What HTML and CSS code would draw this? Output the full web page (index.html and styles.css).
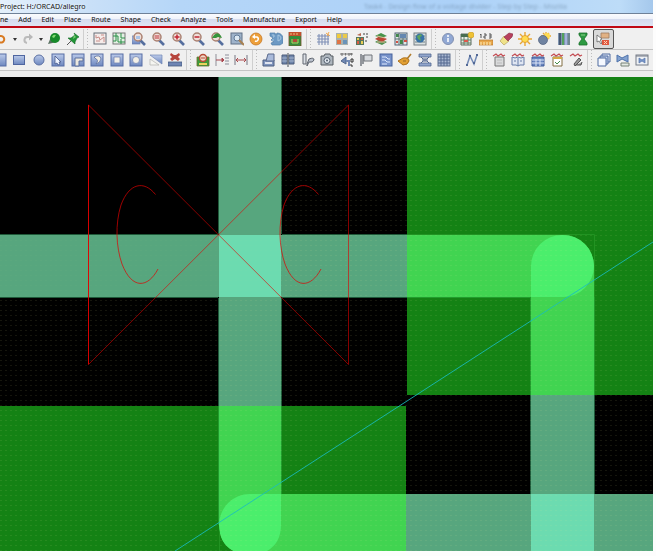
FILE: index.html
```html
<!DOCTYPE html>
<html lang="en">
<head>
<meta charset="utf-8">
<title>Project: H:/ORCAD/allegro</title>
<link rel="stylesheet" href="styles.css">
</head>
<body>
<svg class="sprite" aria-hidden="true">
  <defs>
    <linearGradient id="steel" x1="0" y1="0" x2="0" y2="1"><stop offset="0" stop-color="#bccbea"/><stop offset="1" stop-color="#6d87bf"/></linearGradient>
    <symbol id="i-undo" viewBox="0 0 14 14"><path d="M3 4h4a3.300 3.300 0 1 1-2 6" fill="none" stroke="#d87a22" stroke-width="2"/><path d="M5 1v6L1 4z" fill="#d87a22"/></symbol>
    <symbol id="i-redo" viewBox="0 0 14 14"><path d="M10 5H7a3 3 0 0 0-1 6" fill="none" stroke="#bbb" stroke-width="2"/><path d="M8 1.500v7L12 5z" fill="#b8b8b8"/></symbol>
    <symbol id="i-caret" viewBox="0 0 6 14"><path d="M1 6h4L3 9z" fill="#333"/></symbol>
    <symbol id="i-world" viewBox="0 0 14 14"><path d="M1 12l3-7 6 5z" fill="#587060"/><circle cx="8" cy="6" r="5" fill="#188a2b"/><path d="M5 5q1-3 4-2l-2 3z" fill="#80dc70"/></symbol>
    <symbol id="i-pin" viewBox="0 0 14 14"><path d="M1 13l5-5" stroke="#555" stroke-width="1"/><path d="M8 1l5 4-2 1-2 4 0 2-7-6 3 0 4-3z" fill="#209536" stroke="#116824" stroke-width=".6"/><path d="M8 3l2 2-3 2z" fill="#76cc70"/></symbol>
    <symbol id="i-ratsoff" viewBox="0 0 14 14"><rect x="1" y="1" width="12" height="11" fill="#f5ecea" stroke="#666e78"/><path d="M3 3v3l3-1 1 3 4-3v5M3 9h4M8 3h3" fill="none" stroke="#c98e8a"/></symbol>
    <symbol id="i-ratson" viewBox="0 0 14 14"><rect x="1" y="1" width="12" height="11" fill="#e4f0e4" stroke="#777"/><path d="M1 4h5v6h7M1 9h3V1M9 1v5h4M9 7v5" fill="none" stroke="#2b9046"/></symbol>
    <symbol id="i-mag" viewBox="0 0 14 14"><path d="M8 8l5 5" stroke="#566f9e" stroke-width="2.600"/><circle cx="6" cy="5" r="4" fill="#f0dfd9" stroke="#aa8171" stroke-width="1.500"/></symbol>
    <symbol id="i-zoomwin" viewBox="0 0 14 14"><rect x="0" y="4" width="8" height="8" fill="url(#steel)" stroke="#6a7fae" stroke-width=".7"/><use href="#i-mag" width="14" height="14"/><path d="M4 4h4v3H4z" fill="#a9c3e7"/></symbol>
    <symbol id="i-zoomfit" viewBox="0 0 14 14"><use href="#i-mag" width="14" height="14"/><path d="M3.500 4h5M3.500 6h5" stroke="#c03239" stroke-width="1.200"/></symbol>
    <symbol id="i-zoomin" viewBox="0 0 14 14"><use href="#i-mag" width="14" height="14"/><path d="M3.500 5h5M6 2.500v5" stroke="#c32632" stroke-width="1.500"/></symbol>
    <symbol id="i-zoomout" viewBox="0 0 14 14"><use href="#i-mag" width="14" height="14"/><path d="M3.500 5h5" stroke="#c32632" stroke-width="1.500"/></symbol>
    <symbol id="i-zoomprev" viewBox="0 0 14 14"><use href="#i-mag" width="14" height="14"/><path d="M2 6l2-3q4-4 7 1l1 2-4-1-2 1z" fill="#36953a"/></symbol>
    <symbol id="i-zoomsel" viewBox="0 0 14 14"><rect x="1" y="1" width="11" height="11" fill="#9fb3ca" stroke="#617086"/><circle cx="7" cy="6" r="3" fill="#dce8f2" stroke="#617a98"/><path d="M9 8l5 5" stroke="#a88152" stroke-width="2"/></symbol>
    <symbol id="i-refresh" viewBox="0 0 14 14"><circle cx="7" cy="7" r="6" fill="#ed9f3a" stroke="#c77926" stroke-width=".8"/><path d="M5 5h3a2 2 0 1 1-2 4" fill="none" stroke="#fff" stroke-width="1.500"/><path d="M6 2v5L3 5z" fill="#fff"/></symbol>
    <symbol id="i-3d" viewBox="0 0 14 14"><path d="M1 1h5l1 2 1-2q5 0 6 5v5l-3 2H3l-1-2 3-1-3-2 2-2-3-2z" fill="#6c99c4" stroke="#527fa9" stroke-width=".7"/><path d="M3 3h2v2H4M3 8h2M9 3v6q3-1 3-3T9 3" fill="none" stroke="#a7c7e0"/></symbol>
    <symbol id="i-board" viewBox="0 0 14 14"><rect x="1" y="0" width="12" height="14" fill="#348d3b" stroke="#75502b" stroke-width=".8"/><path d="M1 0h12v4H1z" fill="#c44f2d"/><path d="M3 1v2M6 1v2M9 1v2" stroke="#eac27e"/><path d="M4 7v4h6V7" fill="none" stroke="#b6cd64"/><path d="M5 7h4v3H5z" fill="#b34b37"/></symbol>
    <symbol id="i-grid" viewBox="0 0 14 14"><path d="M3 2v11M6 2v11M9 2v11M12 2v11M1 4h12M1 7h12M1 10h12" stroke="#7f90b6" stroke-width="1.100"/><path d="M10 1l4 3M13 0l-2 4" stroke="#f4a94c"/></symbol>
    <symbol id="i-colors" viewBox="0 0 14 14"><path d="M1 1h12v12H1z" fill="#a9b1ad"/><path d="M2 2h4v4H2z" fill="#f0ca3b"/><path d="M8 2h4v4H8z" fill="#e9c94a"/><path d="M2 8h4v4H2z" fill="#df7445"/><path d="M8 8h4v4H8z" fill="#6a93b9"/></symbol>
    <symbol id="i-shadow" viewBox="0 0 14 14"><path d="M1 5h8v8H1z" fill="#56765c"/><path d="M2 6h2v2H2zM6 9h2v3H6z" fill="#ebcd55"/><path d="M2 9h2v3H2zM6 6h2v2H6z" fill="#d85b44"/><path d="M8 1h2v2H8zM11 1h2v2h-2zM11 4h2v2h-2zM10 8h2v2h-2z" fill="#999"/><path d="M2 3l4-2v3z" fill="#b96a50"/></symbol>
    <symbol id="i-layers" viewBox="0 0 14 14"><path d="M1 10l5-3 7 3-5 3z" fill="#4e9052"/><path d="M1 7l5-3 7 3-5 3z" fill="#ba4635"/><path d="M1 4l6-3 6 3-6 2z" fill="#47934a"/><path d="M3 4l8 2M3 10l8 0" stroke="#e7b795"/></symbol>
    <symbol id="i-table" viewBox="0 0 14 14"><rect x="1" y="1" width="12" height="12" fill="#e2e8e6" stroke="#536577"/><path d="M2 2h3v3H2zM6 8h3v4H6z" fill="#418b4a"/><path d="M6 2h6v4H6z" fill="#6487b0"/><path d="M1 7h12M5 1v12M9 6v7" stroke="#5f7277"/><path d="M10 8h3v2h-3zM2 9h2v2H2z" fill="#d45043"/></symbol>
    <symbol id="i-globe" viewBox="0 0 14 14"><rect x="1" y="1" width="12" height="12" fill="#dbe1e1" stroke="#777f83"/><path d="M2 4h10M2 7h10M2 10h10" stroke="#6f8087"/><circle cx="7" cy="6" r="4.500" fill="#3872a5"/><path d="M4 4l4-2 1 2-2 1 1 4-3-2z" fill="#5ca55d"/></symbol>
    <symbol id="i-info" viewBox="0 0 14 14"><circle cx="7" cy="7" r="5.500" fill="#91a8d4" stroke="#8290b0"/><path d="M7 6v4M7 3v2" stroke="#fff" stroke-width="1.500"/></symbol>
    <symbol id="i-sheet" viewBox="0 0 14 14"><path d="M1 2h10v11H1z" fill="#e8ede5" stroke="#5e6d61"/><path d="M1 2h9v3H1z" fill="#486d50"/><path d="M4 5v8M8 5v8M1 8h10M1 11h10" stroke="#607e66"/><path d="M4 8h4v2H4z" fill="#dc594d"/><circle cx="11" cy="3" r="3" fill="#efc235" stroke="#c89a24" stroke-width=".6"/></symbol>
    <symbol id="i-ruler" viewBox="0 0 14 14"><path d="M2 2v4M1 3l1-1M5 2h2v2H5v2h2M10 2h2v4h-2M10 4h2" fill="none" stroke="#555"/><path d="M0 8h14v5H0z" fill="#e9a84c" stroke="#b8752c" stroke-width=".7"/><path d="M2 10v3M5 10v3M8 10v3M11 10v3" stroke="#fff0bd"/></symbol>
    <symbol id="i-brush" viewBox="0 0 14 14"><path d="M5 4l5 5-5 4-4-4z" fill="#efe28a" stroke="#b4a35d" stroke-width=".7"/><path d="M10 1l4 1-1 3-4 4-4-4z" fill="#b8405d" stroke="#812c44" stroke-width=".6"/></symbol>
    <symbol id="i-sun" viewBox="0 0 14 14"><path d="M7 0v14M0 7h14M2 2l10 10M12 2L2 12" stroke="#e7a634" stroke-width="1.400"/><circle cx="7" cy="7" r="3.500" fill="#ffdb50" stroke="#df9723" stroke-width=".8"/></symbol>
    <symbol id="i-suncloud" viewBox="0 0 14 14"><path d="M9 0v8M4 4h10M6 1l6 6M12 1L7 6" stroke="#e7a634" stroke-width="1.300"/><circle cx="10" cy="4" r="3" fill="#ffdb50"/><circle cx="6" cy="8" r="4.500" fill="#7083a1" stroke="#4e5f7c" stroke-width=".7"/></symbol>
    <symbol id="i-bars" viewBox="0 0 14 14"><path d="M1 1h12v12H1z" fill="#7f93ae"/><path d="M3 1v12" stroke="#455773" stroke-width="2"/><path d="M6 1v12" stroke="#52a15b" stroke-width="2"/><path d="M9 1v12" stroke="#a3b2dc" stroke-width="2"/><path d="M12 1v12" stroke="#607a72" stroke-width="1"/></symbol>
    <symbol id="i-glass" viewBox="0 0 14 14"><path d="M3 1h8v2L8 7l3 4v2H3v-2l3-4-3-4z" fill="#2d9a42" stroke="#19702b" stroke-width=".8"/><path d="M5 3h4" stroke="#8ad087"/></symbol>
    <symbol id="i-place" viewBox="0 0 14 14"><path d="M5 1h8v5H5z" fill="#e1b184" stroke="#a07b60" stroke-width=".8"/><path d="M6 8h7v5H6z" fill="#e05840"/><path d="M8 9l3 3M11 9l-3 3" stroke="#ffd3b9"/><path d="M1 3v7l2-1 2 3 1-1-2-3 2-1z" fill="#fff" stroke="#555" stroke-width=".7"/></symbol>
    <symbol id="i-rect" viewBox="0 0 14 14"><rect x="1.500" y="2.500" width="11" height="9" fill="url(#steel)" stroke="#4f66a0"/></symbol>
    <symbol id="i-circle" viewBox="0 0 14 14"><circle cx="7" cy="7" r="5" fill="url(#steel)" stroke="#5c70a3"/></symbol>
    <symbol id="i-square" viewBox="0 0 14 14"><rect x="1" y="1" width="12" height="12" fill="url(#steel)" stroke="#566ca4"/></symbol>
    <symbol id="i-select" viewBox="0 0 14 14"><use href="#i-square" width="14" height="14"/><path d="M4 3v8l2-1 1 2 2-1-1-2h2z" fill="#eef4ff" stroke="#445689" stroke-width=".8"/></symbol>
    <symbol id="i-void" viewBox="0 0 14 14"><use href="#i-square" width="14" height="14"/><path d="M4 13V5h8v3H8v5z" fill="#ece8df" stroke="#5d709e"/></symbol>
    <symbol id="i-pie" viewBox="0 0 14 14"><use href="#i-square" width="14" height="14"/><path d="M4 4q6-3 7 2-1 4-5 5 3-4 0-5z" fill="#f1eee5" stroke="#5d709e" stroke-width=".8"/></symbol>
    <symbol id="i-frame" viewBox="0 0 14 14"><use href="#i-square" width="14" height="14"/><path d="M4 4h6v6H4z" fill="#f3f0e9" stroke="#7487b4" stroke-width=".8"/></symbol>
    <symbol id="i-hole" viewBox="0 0 14 14"><use href="#i-square" width="14" height="14"/><circle cx="7" cy="7" r="3.500" fill="#f4f0e7" stroke="#7487b4" stroke-width=".8"/></symbol>
    <symbol id="i-cut" viewBox="0 0 14 14"><path d="M1 2h12v9z" fill="url(#steel)" stroke="#7187b5" stroke-width=".7"/><path d="M1 6l9 6H1z" fill="#f5f5f1" stroke="#b3b3af" stroke-width=".7"/></symbol>
    <symbol id="i-delete" viewBox="0 0 14 14"><path d="M3 0l3 2h2l3-2 1 2-2 2 2 2-2 2-3-2-3 2-2-2 2-2-2-2z" fill="#b6453d"/><path d="M0 9h14v4H0z" fill="#6e85b4" stroke="#475a80" stroke-width=".8"/></symbol>
    <symbol id="i-chip" viewBox="0 0 14 14"><path d="M1 4h12v9H1z" fill="#3c9b3b" stroke="#6f6f31" stroke-width=".8"/><circle cx="7" cy="5" r="3.500" fill="#f0d9c8" stroke="#b74b36" stroke-width="1.500"/><path d="M5 5h4" stroke="#b74b36"/><path d="M3 11h8" stroke="#e9d35d" stroke-width="2"/></symbol>
    <symbol id="i-dimedge" viewBox="0 0 14 14"><path d="M1 1v12" stroke="#8f8f98"/><path d="M11 1v12M13 1v12" stroke="#8d8d99" stroke-dasharray="2 1"/><path d="M1 7h7M7 5l2 2-2 2z" fill="#aa4851" stroke="#aa4851"/></symbol>
    <symbol id="i-dim" viewBox="0 0 14 14"><path d="M1 2v10M13 2v10" stroke="#777782"/><path d="M2 7h10M4 5L2 7l2 2M10 5l2 2-2 2" fill="none" stroke="#ab4a4e"/></symbol>
    <symbol id="i-print" viewBox="0 0 14 14"><path d="M1 7h11v6H1z" fill="#8095be" stroke="#4d5e81"/><path d="M6 1h6v7H4z" fill="#a9bada" stroke="#5b6b8d"/><path d="M3 10h7" stroke="#fff" stroke-width="1.500"/></symbol>
    <symbol id="i-mirror" viewBox="0 0 14 14"><path d="M1 2h5v9H1zM8 2h5v9H8z" fill="#6f85ab" stroke="#4d5d7b"/><path d="M7 0v14" stroke="#464c55"/><path d="M1 5h5M8 5h5M1 8h5M8 8h5" stroke="#b4c1d7" stroke-width=".8"/></symbol>
    <symbol id="i-clip" viewBox="0 0 14 14"><path d="M2 1h3v10H2z" fill="#dce0e6" stroke="#626872"/><path d="M6 11l2-5q5-2 5 1-1 3-5 2l-2 4z" fill="#b9c0cc" stroke="#5c626c"/></symbol>
    <symbol id="i-camera" viewBox="0 0 14 14"><path d="M1 3h3l1-2h5l1 2h2v9H1z" fill="#aeb6be" stroke="#575d63"/><circle cx="7" cy="7.500" r="3" fill="#e1e7ef" stroke="#54606e"/><circle cx="7" cy="7.500" r="1" fill="#54606e"/></symbol>
    <symbol id="i-rename" viewBox="0 0 14 14"><path d="M1 0h2v2H1zM5 0h1v2H5zM8 0h2v2H8zM11 0h1v2h-1z" fill="none" stroke="#555" stroke-width=".8"/><path d="M6 4v7L1 8z" fill="#7189b4" stroke="#53688d"/><path d="M6 8h3v5" fill="none" stroke="#7189b4" stroke-width="2"/><path d="M11 6v3h2V6zM11 11v2h2" fill="none" stroke="#333"/></symbol>
    <symbol id="i-flag" viewBox="0 0 14 14"><path d="M2 1v12M4 2v9" stroke="#747980" stroke-width="1.500"/><path d="M5 2h8v6H5z" fill="#d8dbdf" stroke="#70757b"/></symbol>
    <symbol id="i-script" viewBox="0 0 14 14"><rect x="1" y="1" width="12" height="12" fill="#7792ca" stroke="#47629c"/><path d="M3 4h4l2 2h2M3 7h3l2 2h3M3 11h5" fill="none" stroke="#dce7fc"/></symbol>
    <symbol id="i-teardrop" viewBox="0 0 14 14"><path d="M0 8l5-3q6-1 6 3-1 4-6 4z" fill="#e2a034" stroke="#ac711d"/><path d="M9 6l4-5M5 8h3" stroke="#b07c2c" stroke-width="1.600"/></symbol>
    <symbol id="i-spread" viewBox="0 0 14 14"><path d="M1 1h12v3H1zM1 10h12v3H1z" fill="#91a5cc" stroke="#52678f" stroke-width=".8"/><path d="M3 4l2 2h4l2-2M3 10l2-2h4l2 2M4 7h6" fill="none" stroke="#52678f"/></symbol>
    <symbol id="i-mesh" viewBox="0 0 14 14"><rect x="1" y="1" width="12" height="12" fill="#a9b8d2" stroke="#61718d"/><path d="M1 4h12M1 7h12M1 10h12M4 1v12M7 1v12M10 1v12" fill="none" stroke="#54698f"/></symbol>
    <symbol id="i-route" viewBox="0 0 14 14"><path d="M2 12l3-9 4 8 3-9" fill="none" stroke="#7189b5" stroke-width="1.500"/><path d="M1 11h2v2H1zM4 2h2v2H4zM8 9h2v2H8zM11 1h2v2h-2z" fill="#526895"/></symbol>
    <symbol id="i-net" viewBox="0 0 14 14"><path d="M1 3l3-2 2 2 3-2 2 2 2-1" fill="none" stroke="#c44c53" stroke-width="1.200"/></symbol>
    <symbol id="i-net1" viewBox="0 0 14 14"><path d="M3 4h9v9H3z" fill="#d9dadb" stroke="#777"/><path d="M5 7h5M5 10h5" stroke="#bbb"/><use href="#i-net" width="14" height="14"/></symbol>
    <symbol id="i-net2" viewBox="0 0 14 14"><path d="M1 4l3 1 3-1 3 1 3-1v8H9l-2 1-2-1H1z" fill="#e0e6f2" stroke="#667da6"/><path d="M7 5v8M3 8h2M9 8h2" stroke="#667da6"/><use href="#i-net" width="14" height="14"/></symbol>
    <symbol id="i-net3" viewBox="0 0 14 14"><path d="M1 4h12v9H1z" fill="#6985bf" stroke="#435f9a"/><path d="M1 7h12M1 10h12M5 6v7M9 6v7" stroke="#dbe3f5"/><use href="#i-net" width="14" height="14"/></symbol>
    <symbol id="i-net4" viewBox="0 0 14 14"><path d="M3 4h9v9H3z" fill="#fff" stroke="#826e42"/><path d="M3 4h9v2H3z" fill="#d5a944"/><path d="M5 9l2 2 3-3" fill="none" stroke="#448b45"/><use href="#i-net" width="14" height="14"/></symbol>
    <symbol id="i-net5" viewBox="0 0 14 14"><path d="M5 11l5-6 2 2-6 6zM7 12h5l1-3" fill="#999" stroke="#555"/><use href="#i-net" width="14" height="14"/></symbol>
    <symbol id="i-cascade" viewBox="0 0 14 14"><path d="M5 1h8v8H5z" fill="#e2e9f8" stroke="#4f6b9f"/><path d="M3 3h8v8H3z" fill="#bdcce9" stroke="#4f6b9f"/><path d="M1 5h8v8H1z" fill="#f5f8ff" stroke="#4f6b9f"/></symbol>
    <symbol id="i-bow" viewBox="0 0 14 14"><path d="M1 2l5 3 6-3v7L6 6 1 9z" fill="#83a2d0" stroke="#4e72ab"/><path d="M5 10h8v3H5z" fill="#e3e9e3" stroke="#778276"/></symbol>
    <symbol id="i-bowbox" viewBox="0 0 14 14"><rect x="1" y="2" width="12" height="10" fill="#eef1f5" stroke="#747b86"/><path d="M1 3h12" stroke="#747b86"/><path d="M4 5l3 2 3-2v5L7 8l-3 2z" fill="#7896ca" stroke="#5474ab" stroke-width=".7"/></symbol>
  </defs>
</svg>
<div class="window">
  <header class="titlebar">
    <h1 class="title">Project: H:/ORCAD/allegro</h1>
    <span class="ghost" aria-hidden="true">Task4 - Design flow of a voltage divider - Step by Step - Mozilla</span>
  </header>
  <nav class="menubar" aria-label="Main menu">
    <button>ne</button><button>Add</button><button>Edit</button><button>Place</button><button>Route</button><button>Shape</button><button>Check</button><button>Analyze</button><button>Tools</button><button>Manufacture</button><button>Export</button><button>Help</button>
  </nav>
  <div class="toolbar" role="toolbar" aria-label="View tools">
    <div class="group history">
      <button aria-label="Undo"><svg><use href="#i-undo"/></svg></button>
      <button class="drop" aria-label="Undo list"><svg><use href="#i-caret"/></svg></button>
      <button aria-label="Redo"><svg><use href="#i-redo"/></svg></button>
      <button class="drop" aria-label="Redo list"><svg><use href="#i-caret"/></svg></button>
      <button aria-label="World"><svg><use href="#i-world"/></svg></button>
      <button aria-label="Pin"><svg><use href="#i-pin"/></svg></button>
    </div>
    <div class="group eleven">
      <button aria-label="Unrats"><svg><use href="#i-ratsoff"/></svg></button>
      <button aria-label="Rats"><svg><use href="#i-ratson"/></svg></button>
      <button aria-label="Zoom window"><svg><use href="#i-zoomwin"/></svg></button>
      <button aria-label="Zoom fit"><svg><use href="#i-zoomfit"/></svg></button>
      <button aria-label="Zoom in"><svg><use href="#i-zoomin"/></svg></button>
      <button aria-label="Zoom out"><svg><use href="#i-zoomout"/></svg></button>
      <button aria-label="Zoom previous"><svg><use href="#i-zoomprev"/></svg></button>
      <button aria-label="Zoom selection"><svg><use href="#i-zoomsel"/></svg></button>
      <button aria-label="Refresh"><svg><use href="#i-refresh"/></svg></button>
      <button aria-label="3D view"><svg><use href="#i-3d"/></svg></button>
      <button aria-label="Board"><svg><use href="#i-board"/></svg></button>
    </div>
    <div class="group six">
      <button aria-label="Grid"><svg><use href="#i-grid"/></svg></button>
      <button aria-label="Colors"><svg><use href="#i-colors"/></svg></button>
      <button aria-label="Shadow"><svg><use href="#i-shadow"/></svg></button>
      <button aria-label="Layers"><svg><use href="#i-layers"/></svg></button>
      <button aria-label="Constraints"><svg><use href="#i-table"/></svg></button>
      <button aria-label="Globe"><svg><use href="#i-globe"/></svg></button>
    </div>
    <div class="group nine">
      <button aria-label="Information"><svg><use href="#i-info"/></svg></button>
      <button aria-label="Properties"><svg><use href="#i-sheet"/></svg></button>
      <button aria-label="Measure"><svg><use href="#i-ruler"/></svg></button>
      <button aria-label="Highlight"><svg><use href="#i-brush"/></svg></button>
      <button aria-label="Brighten"><svg><use href="#i-sun"/></svg></button>
      <button aria-label="Dim"><svg><use href="#i-suncloud"/></svg></button>
      <button aria-label="Layer bars"><svg><use href="#i-bars"/></svg></button>
      <button aria-label="Status"><svg><use href="#i-glass"/></svg></button>
      <button class="active" aria-pressed="true" aria-label="Place mode"><svg><use href="#i-place"/></svg></button>
    </div>
  </div>
  <div class="toolbar second" role="toolbar" aria-label="Edit tools">
    <div class="group ten lead">
      <button aria-label="Shape"><svg><use href="#i-square"/></svg></button>
      <button aria-label="Rectangle"><svg><use href="#i-rect"/></svg></button>
      <button aria-label="Circle"><svg><use href="#i-circle"/></svg></button>
      <button aria-label="Select shape"><svg><use href="#i-select"/></svg></button>
      <button aria-label="Void polygon"><svg><use href="#i-void"/></svg></button>
      <button aria-label="Void arc"><svg><use href="#i-pie"/></svg></button>
      <button aria-label="Void rectangle"><svg><use href="#i-frame"/></svg></button>
      <button aria-label="Void circle"><svg><use href="#i-hole"/></svg></button>
      <button aria-label="Edit boundary"><svg><use href="#i-cut"/></svg></button>
      <button aria-label="Delete islands"><svg><use href="#i-delete"/></svg></button>
    </div>
    <div class="group three">
      <button aria-label="Component"><svg><use href="#i-chip"/></svg></button>
      <button aria-label="Edge dimension"><svg><use href="#i-dimedge"/></svg></button>
      <button aria-label="Dimension"><svg><use href="#i-dim"/></svg></button>
    </div>
    <div class="group ten">
      <button aria-label="Plot"><svg><use href="#i-print"/></svg></button>
      <button aria-label="Mirror"><svg><use href="#i-mirror"/></svg></button>
      <button aria-label="Clip"><svg><use href="#i-clip"/></svg></button>
      <button aria-label="Snapshot"><svg><use href="#i-camera"/></svg></button>
      <button aria-label="Rename"><svg><use href="#i-rename"/></svg></button>
      <button aria-label="Flag"><svg><use href="#i-flag"/></svg></button>
      <button aria-label="Script"><svg><use href="#i-script"/></svg></button>
      <button aria-label="Teardrop"><svg><use href="#i-teardrop"/></svg></button>
      <button aria-label="Spread"><svg><use href="#i-spread"/></svg></button>
      <button aria-label="Mesh"><svg><use href="#i-mesh"/></svg></button>
    </div>
    <div class="group one">
      <button aria-label="Route"><svg><use href="#i-route"/></svg></button>
    </div>
    <div class="group five">
      <button aria-label="Net delete"><svg><use href="#i-net1"/></svg></button>
      <button aria-label="Net book"><svg><use href="#i-net2"/></svg></button>
      <button aria-label="Net table"><svg><use href="#i-net3"/></svg></button>
      <button aria-label="Net check"><svg><use href="#i-net4"/></svg></button>
      <button aria-label="Net edit"><svg><use href="#i-net5"/></svg></button>
    </div>
    <div class="group three">
      <button aria-label="Cascade"><svg><use href="#i-cascade"/></svg></button>
      <button aria-label="Flip"><svg><use href="#i-bow"/></svg></button>
      <button aria-label="Flip box"><svg><use href="#i-bowbox"/></svg></button>
    </div>
  </div>
  <main class="canvas">
    <svg viewBox="0 0 653 474" preserveAspectRatio="xMidYMid slice" role="img" aria-label="Board layout">
      <defs>
        <pattern id="dots" width="5" height="5" patternUnits="userSpaceOnUse"><path d="M0 3h2v1H0z" fill="#e8e890" opacity=".09"/></pattern>
      </defs>
      <path d="M0 0h653v474H0z" fill="#000"/>
      <!-- copper planes -->
      <path d="M407 0h246v318H407zM0 329h406v145H0z" fill="#148214"/>
      <!-- traces over bare board -->
      <path d="M219 0h62v158h126v62H281v109h-62V220H0v-62h219zM531 318h63v99h59v57H406v-57h125z" fill="#57a67e"/>
      <path d="M219 158h62v62h-62zM531 417h63v57h-63z" fill="#6cdbb0"/>
      <!-- traces over copper -->
      <path d="M407 158h156a31 31 0 0 1 31 31v129h-63v-98H407zM219 329h62v88h125v57H234Q219 467 219 448z" fill="#41d451"/>
      <path d="M531 220v-31a31.500 31 0 0 1 63 0 31 31 0 0 1-31 31zM281 417h-31a31 31 0 0 0-31 31q0 19 14 26h34q14-8 14-26z" fill="#4bee6c"/>
      <path d="M219 448v26h14q-14-8-14-26z" fill="#148214"/>
      <path d="M407 157.500h187.500V220M219.500 455v19" fill="none" stroke="#219322"/>
      <path d="M0 157.500h218M282 157.500h125M0 220.500h218M282 220.500h125M218.500 0v157M281.500 0v157M218.500 221v108M281.500 221v108M530.500 318v99M594.500 318v99" fill="none" stroke="#1f5a3a"/>
      <path d="M407 220.500h124M530.500 220v98M594.500 220v98M218.500 329v119M281.500 329v88" fill="none" stroke="#229b2d"/>
      <path d="M281 0h372v474H0V220h281z" fill="url(#dots)"/>
      <path d="M0 158h281v62H0z" fill="url(#dots)" opacity=".3"/>
      <!-- package outline and letters -->
      <g fill="none" stroke="#e00000">
        <path d="M88.500 28v259.500" stroke-opacity=".95"/>
        <path d="M348.500 28v259.500M88.500 28L348.500 287.500M88.500 287.500L348.500 28" stroke-opacity=".6"/>
        <path d="M155.500 117.500C144 103 129 106 121 128C115 147 116 170 122 187C132 213 148 211 158 192M318.500 117.500C307 103 292 106 284 128C278 147 279 170 285 187C295 213 311 211 321 192" stroke-opacity=".7"/>
      </g>
      <path d="M175 474L653 165" stroke="#19bcc0" stroke-opacity=".85" fill="none"/>
    </svg>
  </main>
</div>
</body>
</html>
```
FILE: styles.css
```css
* { box-sizing: border-box; }

body {
  margin: 0;
  background: #fdfdfd;
  font-family: "Noto Sans", "Open Sans", sans-serif;
  font-size: 7px;
  color: #111;
}

button {
  margin: 0;
  padding: 0;
  border: 0;
  background: none;
  font: inherit;
  color: inherit;
}

.sprite { position: absolute; width: 0; height: 0; }

.window {
  display: flex;
  flex-direction: column;
  height: calc(100vh - 5px);
  margin-right: 3px;
  overflow: hidden;
}

.titlebar {
  display: flex;
  align-items: center;
  justify-content: space-between;
  height: 14px;
  padding-right: 86px;
  border-bottom: 1px solid #6f8198;
  background: linear-gradient(90deg, #e4f0fc 0, #c9e0f8 90px, #b5d6f8 180px, #acd1f8 450px, #bddcf8 620px, #a5c8ec 100%);
}

.title {
  margin: 0;
  font-size: 7px;
  font-weight: 400;
  line-height: 13px;
  white-space: nowrap;
  text-shadow: 0 0 3px #fff;
}

.ghost {
  font-size: 7px;
  line-height: 13px;
  white-space: nowrap;
  color: #5c7893;
  opacity: .5;
  filter: blur(1px);
}

.menubar {
  display: flex;
  gap: 10px;
  height: 14px;
  border-bottom: 2px solid #c00814;
  background: linear-gradient(#fafbfe 0, #f0f3fa 40%, #d5dbee 45%, #dfe4f3 100%);
  line-height: 12px;
}

.toolbar {
  display: flex;
  flex: none;
  align-items: center;
  gap: 8px;
  height: 22px;
  border-bottom: 1px solid #c4c4c4;
  background: #f0f0f0;
}

.toolbar.second {
  height: 21px;
}

.group {
  position: relative;
  display: flex;
  flex: none;
  height: 20px;
}

.group + .group::before {
  content: "";
  position: absolute;
  left: -7px;
  top: 0;
  width: 6px;
  height: 100%;
  background:
    linear-gradient(#cfcfcf, #cfcfcf) 0 0 / 1px 100% no-repeat,
    repeating-linear-gradient(#bdbdbd 0 1px, transparent 1px 3px) 4px 0 / 1px 100% no-repeat;
}

.group button {
  display: flex;
  flex: 1 1 0;
  min-width: 0;
  align-items: center;
  justify-content: center;
}

.group svg { flex: none; width: 14px; height: 14px; }
.history { width: 90px; margin-left: -8px; }
.group .drop { flex: 0 0 8px; }
.group .drop svg { width: 6px; }
.eleven { width: 215px; }
.six { width: 117px; }
.nine { width: 176px; }
.ten { width: 195px; }
.lead { margin-left: -10px; }
.three { width: 58px; }
.one { width: 19px; }
.five { width: 97px; }

.group .active {
  border: 1px solid #555;
  border-radius: 2px;
  background: #d9d9d9;
}

.canvas {
  flex: 1;
  min-height: 0;
  border-top: 6px solid #ececec;
  background: #000;
}

.canvas svg { display: block; width: 100%; height: 100%; }
```
